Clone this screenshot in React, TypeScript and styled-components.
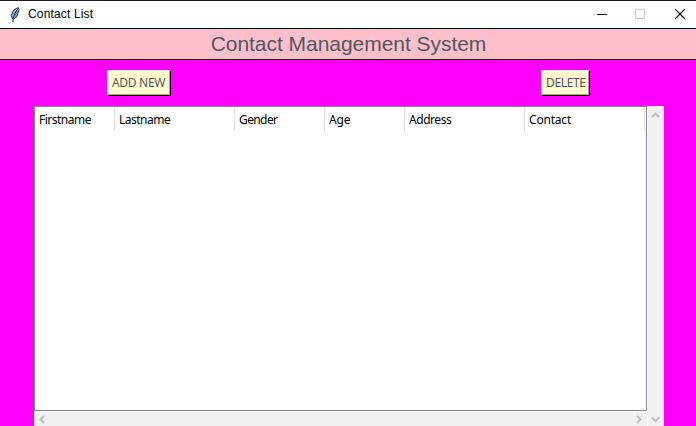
import React from "react";
import styled, { createGlobalStyle } from "styled-components";

const GlobalStyle = createGlobalStyle`
  * { box-sizing: border-box; }
  html, body { margin: 0; padding: 0; overflow: hidden; }
`;

const Window = styled.div`
  width: 696px;
  height: 426px;
  display: flex;
  flex-direction: column;
  overflow: hidden;
  background: #ff00ff;
  font-family: "Noto Sans", sans-serif;
`;

const TitleBar = styled.header`
  height: 28px;
  flex: none;
  display: flex;
  align-items: center;
  border-top: 1px solid #211b30;
  background: #fff;
  padding-left: 8px;
`;

const TitleText = styled.span`
  flex: 1;
  margin-left: 6px;
  padding-bottom: 2px;
  font: 12px/16px "Liberation Sans", Arial, sans-serif;
  letter-spacing: 0.15px;
  color: #000;
`;

const Controls = styled.div`
  display: grid;
  grid-template-columns: 38px 40px 21px;
  padding-bottom: 1px;
`;

const Glyph = styled.svg`
  display: block;
  flex: none;
`;

const Banner = styled.h1`
  height: 32px;
  flex: none;
  margin: 0;
  border: solid #000;
  border-width: 1px 0;
  background: #ffc0cb;
  color: #4f5762;
  text-align: center;
  font: 400 21px/30px "Liberation Sans", Arial, sans-serif;
  letter-spacing: -0.04px;
  padding-left: 1px;
`;

const Toolbar = styled.div`
  height: 46px;
  flex: none;
  display: flex;
  justify-content: space-between;
  align-items: flex-start;
  padding: 10px 106px 0 107px;
`;

const Button = styled.button<{ $width: number; $spacing: number }>`
  width: ${(p) => p.$width}px;
  height: 26px;
  padding: 0 0 0 4px;
  border: 1px solid;
  border-color: #fffbd8 #000 #000 #fffbd8;
  box-shadow: inset -1px -1px 0 #a9a48c;
  background: #fffacd;
  color: #4f5762;
  font: 12px/22px "Noto Sans", sans-serif;
  letter-spacing: ${(p) => p.$spacing}px;
  text-align: left;
  white-space: nowrap;
`;

const TableArea = styled.div`
  display: grid;
  grid-template-columns: 613px 16px;
  grid-template-rows: 305px 14px;
  gap: 1px;
  width: 630px;
  margin-left: 34px;
  background: #fff;
`;

const Table = styled.div`
  border: 1px solid #828790;
  background: #fff;
`;

const HeaderRow = styled.div`
  display: flex;
  height: 24px;
`;

const HeaderCell = styled.div<{ $width: number; $spacing: number }>`
  width: ${(p) => p.$width}px;
  height: 24px;
  flex: none;
  border-right: 1px solid #e5e5e5;
  padding-left: 4px;
  font-size: 12px;
  line-height: 25px;
  letter-spacing: ${(p) => p.$spacing}px;
  white-space: nowrap;
  color: #000;
`;

const VerticalBar = styled.div`
  grid-row: 1 / 3;
  grid-column: 2;
  display: flex;
  flex-direction: column;
  justify-content: space-between;
  align-items: flex-start;
  padding: 5px 0 2px 3px;
  background: #f0f0f0;
`;

const HorizontalBar = styled.div`
  display: flex;
  justify-content: space-between;
  align-items: center;
  padding: 0 4px;
  background: #f0f0f0;
`;

const columns = [
  { label: "Firstname", width: 80, spacing: -0.5 },
  { label: "Lastname", width: 120, spacing: -0.5 },
  { label: "Gender", width: 90, spacing: -0.6 },
  { label: "Age", width: 80, spacing: -0.2 },
  { label: "Address", width: 120, spacing: -0.45 },
  { label: "Contact", width: 120, spacing: -0.2 },
];

const Feather = () => (
  <Glyph width="14" height="18" viewBox="0 0 14 18">
    <path d="M10.5 1.5 7 3 4.5 6 3.5 9.5 4 12.5l2 .5 3-2.5L10 7 11 3.5Z" fill="#5d9ae2" stroke="#2b3137" strokeWidth="0.9" />
    <path d="M9.5 3 6.5 8 5 12.5V16" fill="none" stroke="#101820" strokeWidth="1" />
    <path d="M8.5 3.2 5.5 7 4.8 11" fill="none" stroke="#b7cfe8" strokeWidth="0.8" />
  </Glyph>
);

const chevrons = {
  up: "M1 6 4.5 2.5 8 6",
  down: "M1 2.5 4.5 6 8 2.5",
  left: "M6 1 2.5 4.5 6 8",
  right: "M3 1 6.5 4.5 3 8",
};

const Chevron = ({ dir }: { dir: keyof typeof chevrons }) => (
  <Glyph width="9" height="9" viewBox="0 0 9 9">
    <path d={chevrons[dir]} fill="none" stroke="#bfbfbf" strokeWidth="2" />
  </Glyph>
);

export default function App() {
  return (
    <Window>
      <GlobalStyle />
      <TitleBar>
        <Feather />
        <TitleText>Contact List</TitleText>
        <Controls>
          <Glyph width="11" height="11" viewBox="0 0 11 11">
            <path d="M0 5.5h10" stroke="#000" />
          </Glyph>
          <Glyph width="10" height="11" viewBox="0 0 10 11">
            <path d="M.5.5h9v9h-9z" fill="none" stroke="#ccc" />
          </Glyph>
          <Glyph width="11" height="11" viewBox="0 0 11 11">
            <path d="M0 0l10 10M10 0l-10 10" stroke="#000" strokeWidth="1.1" />
          </Glyph>
        </Controls>
      </TitleBar>
      <Banner>Contact Management System</Banner>
      <Toolbar>
        <Button $width={64} $spacing={-0.3}>ADD NEW</Button>
        <Button $width={49} $spacing={-0.35}>DELETE</Button>
      </Toolbar>
      <TableArea>
        <Table>
          <HeaderRow>
            {columns.map((c) => (
              <HeaderCell key={c.label} $width={c.width} $spacing={c.spacing}>
                {c.label}
              </HeaderCell>
            ))}
          </HeaderRow>
        </Table>
        <VerticalBar>
          <Chevron dir="up" />
          <Chevron dir="down" />
        </VerticalBar>
        <HorizontalBar>
          <Chevron dir="left" />
          <Chevron dir="right" />
        </HorizontalBar>
      </TableArea>
    </Window>
  );
}
